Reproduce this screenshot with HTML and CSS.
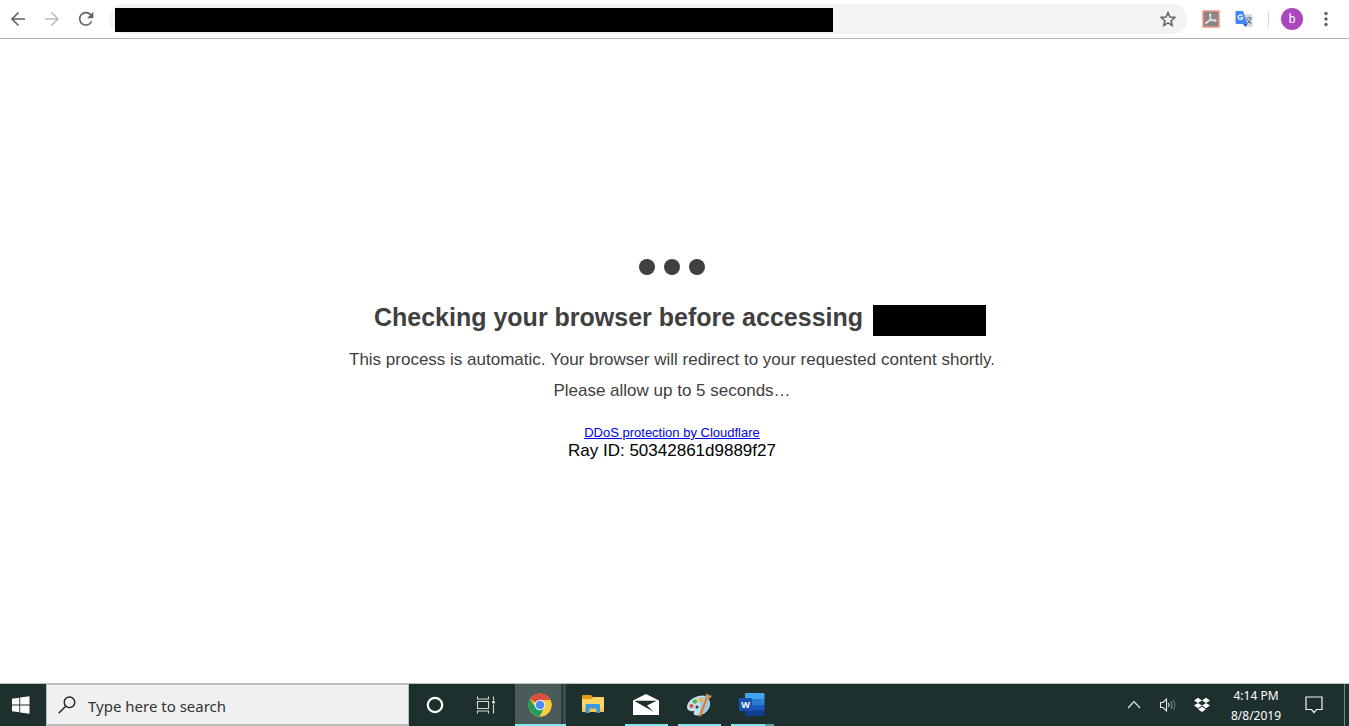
FILE: index.html
```
<!DOCTYPE html>
<html lang="en">
<head>
    <meta charset="UTF-8">
    <meta name="viewport" content="width=device-width, initial-scale=1.0">
    <title>Just a moment...</title>
    <link rel="stylesheet" href="styles.css">
</head>
<body>
    <header class="toolbar">
        <nav class="nav-buttons">
            <button class="icon-button" type="button" aria-label="Back">
                <svg width="16" height="16" viewBox="0 0 16 16" fill="none" stroke="#5f6368" stroke-width="1.6"><path d="M15 8H2.5M8.5 1.5L2 8l6.500 6.500"/></svg>
            </button>
            <button class="icon-button" type="button" aria-label="Forward">
                <svg width="16" height="16" viewBox="0 0 16 16" fill="none" stroke="#bbbdbf" stroke-width="1.6"><path d="M1 8h12.500M7.500 1.500L14 8l-6.500 6.500"/></svg>
            </button>
            <button class="icon-button" type="button" aria-label="Reload">
                <svg width="16" height="16" viewBox="0 0 16 16"><path d="M13.600 10.200A6.200 6.200 0 1 1 12.600 3.800" fill="none" stroke="#5f6368" stroke-width="1.600"/><path d="M15.300 0.800v6.400H9z" fill="#5f6368"/></svg>
            </button>
        </nav>
        <div class="omnibox">
            <input class="address" type="text" aria-label="Address">
            <button class="icon-button" type="button" aria-label="Bookmark">
                <svg width="16" height="16" viewBox="0 0 16 16" fill="none" stroke="#5f6368" stroke-width="1.500"><path d="M8 1.600l1.900 4.500 4.900.4-3.700 3.200 1.100 4.700L8 11.900l-4.200 2.500 1.100-4.700L1.200 6.500l4.900-.4z"/></svg>
            </button>
        </div>
        <div class="extensions">
            <button class="icon-button" type="button" aria-label="Adobe Acrobat">
                <svg width="18" height="18" viewBox="0 0 18 18"><rect x="1" y="1" width="16" height="16" fill="#8b8583" stroke="#ef9584" stroke-width="1.500"/><path d="M4 13.500c2-.4 4.500-5 4.700-8.500.1-1.600-1.300-1.200-1 .3.600 3 3 5.400 5.200 5.900 1.700.3 1.600-1.300-.2-1.300-3.200 0-6.400 1-8.200 2.400-.9.700-.9 1.300-.5 1.200z" fill="none" stroke="#eeeae8" stroke-width="1.100"/></svg>
            </button>
            <button class="icon-button" type="button" aria-label="Google Translate">
                <svg width="18" height="18" viewBox="0 0 18 18"><path d="M7 4h9.500q1 0 1 1v11q0 1-1 1H11z" fill="#dadcdc"/><path d="M1.500 1H8l4.500 13H1.500q-1 0-1-1V2q0-1 1-1z" fill="#4386f5"/><path d="M8 14h4.500L10.500 17z" fill="#2955c4"/><path d="M7.300 5.700A2.300 2.300 0 1 0 7.800 7.500H5.600" fill="none" stroke="#fff" stroke-width="1.200"/><path d="M11 8h6M14 6.800V8M16 8c-.5 2.500-2 4.300-4 5.500M12.300 9c.7 2 2.200 3.700 4.200 4.700" fill="none" stroke="#69828d" stroke-width="1.100"/></svg>
            </button>
        </div>
        <div class="profile">
            <button class="avatar" type="button" aria-label="Profile">b</button>
            <button class="icon-button" type="button" aria-label="Menu">
                <svg width="16" height="16" viewBox="0 0 16 16" fill="#5f6368"><circle cx="8" cy="2.500" r="1.700"/><circle cx="8" cy="8" r="1.700"/><circle cx="8" cy="13.500" r="1.700"/></svg>
            </button>
        </div>
    </header>

    <main class="content">
        <div class="bubbles">
            <span class="bubble"></span>
            <span class="bubble"></span>
            <span class="bubble"></span>
        </div>
        <h1 class="title">Checking your browser before accessing <span class="host"></span></h1>
        <p class="message">This process is automatic. Your browser will redirect to your requested content shortly.</p>
        <p class="message">Please allow up to 5 seconds…</p>
        <div class="attribution">
            <a href="#">DDoS protection by Cloudflare</a>
            <div class="ray">Ray ID: 50342861d9889f27</div>
        </div>
    </main>

    <footer class="taskbar">
        <button class="start" type="button" aria-label="Start">
            <svg width="18" height="18" viewBox="0 0 18 18" fill="#fff"><path d="M0 2.700l7.300-1V8.500H0zM8.200 1.500L17.500.3v8.200H8.200zM0 9.400h7.300v6.900L0 15.300zM8.200 9.400h9.300v8.300l-9.300-1.300z"/></svg>
        </button>
        <label class="search">
            <svg width="18" height="18" viewBox="0 0 18 18" fill="none" stroke="#222" stroke-width="1.400"><circle cx="11.500" cy="6.300" r="5.300"/><path d="M7.700 10.200L.7 17.200"/></svg>
            <input class="search-input" type="text" placeholder="Type here to search" aria-label="Search">
        </label>
        <div class="tools">
            <button class="tool" type="button" aria-label="Cortana">
                <svg width="20" height="20" viewBox="0 0 20 20"><circle cx="10" cy="10" r="7.200" fill="none" stroke="#fff" stroke-width="2.200"/></svg>
            </button>
            <button class="tool" type="button" aria-label="Task View">
                <svg width="20" height="20" viewBox="0 0 20 20" fill="none" stroke="#d5d9d8" stroke-width="1.100"><path d="M1.500 1.500v2.500h11V1.500M1.500 18.500V16h11v2.500M1.500 6.500h11v7h-11zM17.500 1.500v4M17.500 9.500v9"/><path d="M16.300 6h2.400v2.400h-2.400z" fill="#fff" stroke="none"/></svg>
            </button>
        </div>
        <div class="apps">
            <button class="app open active" type="button" aria-label="Chrome">
                <svg width="24" height="24" viewBox="0 0 24 24"><circle cx="12" cy="12" r="11.500" fill="#fbcb3c"/><path d="M12 12L2 6.300A11.500 11.500 0 0 1 22.400 7H12z" fill="#dc4d3d"/><path d="M2 6.300A11.500 11.500 0 0 0 11.600 23.500L16.600 14.700 12 12l-4.500 2.200z" fill="#229b5d"/><path d="M12 7h10.400A11.500 11.500 0 0 1 11.600 23.500l4.900-9z" fill="#fbcb3c"/><circle cx="12" cy="12" r="5.300" fill="#f4f5f5"/><circle cx="12" cy="12" r="4.300" fill="#4c8bf5"/></svg>
            </button>
            <button class="app" type="button" aria-label="File Explorer">
                <svg width="24" height="24" viewBox="0 0 24 24"><path d="M1 3q0-1 1-1h8l2 2v4H1z" fill="#e09b12"/><path d="M1 6h9.500l2-2H22q1 0 1 1v14H1z" fill="#fed667"/><path d="M1 15h22v4H1z" fill="#f8c74e"/><path d="M4.500 20v-8q0-1 1-1h12.500q1 0 1 1v8h-3.500v-4.500h-7V20z" fill="#3b99de"/></svg>
            </button>
            <button class="app open" type="button" aria-label="Mail">
                <svg width="26" height="24" viewBox="0 0 26 24"><path d="M0 7.500L13 1l13 6.500V22H0z" fill="#fff"/><path d="M2.300 7.800h21.400L14 12.500l6.600 6.300L2.300 8.500z" fill="#1e302e"/></svg>
            </button>
            <button class="app open" type="button" aria-label="Paint">
                <svg width="26" height="24" viewBox="0 0 26 24"><path d="M13 3c7-2 11 2 11 8s-6 11.500-13 11.500c-4 0-4-3-2-4.500-3 1-8 0-8-4C1 9 7 4 13 3z" fill="#c3def0"/><path d="M15 4c5-.5 8 2.500 8 7 0 5-4 9-9 10z" fill="#9bc9e7"/><circle cx="5.500" cy="13" r="2" fill="#e84b3a"/><circle cx="9" cy="8.500" r="2.200" fill="#59b948"/><circle cx="14.500" cy="7" r="2.300" fill="#f2b72f"/><circle cx="11" cy="14" r="1.500" fill="#293f45"/><path d="M20.500 6L14 22.500" stroke="#d9822b" stroke-width="2.200" stroke-linecap="round"/><path d="M19 6l1-5.500 2.500 1.200L26 3l-4 4z" fill="#c49563"/></svg>
            </button>
            <button class="app open grouped" type="button" aria-label="Word">
                <svg width="26" height="24" viewBox="0 0 26 24"><path d="M6 1q0-1 1-1h17.500q1 0 1 1v5.500H6z" fill="#41a5ee"/><path d="M6 6h19.500v6H6z" fill="#2b7cd3"/><path d="M6 12h19.500v5.500H6z" fill="#185abd"/><path d="M6 17.500h19.500V22q0 1-1 1H7q-1 0-1-1z" fill="#103f91"/><rect x="0" y="5" width="13" height="13" rx="1" fill="#1a52b3"/><text class="word-letter" x="6.500" y="15" text-anchor="middle">W</text></svg>
            </button>
        </div>
        <div class="tray">
            <button class="tray-button" type="button" aria-label="Show hidden icons">
                <svg width="16" height="16" viewBox="0 0 16 16" fill="none" stroke="#e6e9e8" stroke-width="1.200"><path d="M2 11L8 4.700l6 6.300"/></svg>
            </button>
            <button class="tray-button" type="button" aria-label="Volume">
                <svg width="18" height="16" viewBox="0 0 18 16" fill="none" stroke="#e6e9e8" stroke-width="1.100"><path d="M1.500 5.500h2.500L7.500 2v12L4 10.500H1.500z"/><path d="M9.500 6q1.300 2 0 4"/><path d="M11.700 4.300q2.600 3.700 0 7.400" stroke="#8b9694"/><path d="M14 2.700q3.800 5.300 0 10.600" stroke="#667371"/></svg>
            </button>
            <button class="tray-button" type="button" aria-label="Dropbox">
                <svg width="16" height="16" viewBox="0 0 16 16" fill="#fff"><path d="M4 .8L8 3.400 4 6 0 3.400zM12 .8l4 2.600L12 6 8 3.400zM4 6l4 2.600-4 2.600L0 8.600zM12 6l4 2.600-4 2.600-4-2.600zM8 9.700l4 2.600L8 15l-4-2.700z"/></svg>
            </button>
            <button class="clock" type="button"><span>4:14 PM</span><span>8/8/2019</span></button>
            <button class="notifications" type="button" aria-label="Notifications">
                <svg width="18" height="18" viewBox="0 0 18 18" fill="none" stroke="#f1f3f2" stroke-width="1.200"><path d="M1 1h16v12.500h-5.500L9 16.500l-2.500-3H1z"/></svg>
            </button>
            <button class="show-desktop" type="button" aria-label="Show desktop"></button>
        </div>
    </footer>
</body>
</html>
```
FILE: styles.css
```
* {
    box-sizing: border-box;
}
body {
    display: flex;
    flex-direction: column;
    min-height: 100vh;
    margin: 0;
    background: #fff;
    font-family: "Liberation Sans", Arial, sans-serif;
}
button {
    padding: 0;
    border: 0;
    background: none;
    font: inherit;
}
svg {
    display: block;
}

/* Browser toolbar */
.toolbar {
    display: flex;
    align-items: center;
    height: 39px;
    padding: 0 15px 1px 10px;
    border-bottom: 1px solid #b4b4b4;
}
.nav-buttons {
    display: flex;
    gap: 18px;
}
.icon-button {
    display: flex;
    align-items: center;
    justify-content: center;
    min-width: 16px;
}
.omnibox {
    display: flex;
    flex: 1;
    align-items: center;
    justify-content: space-between;
    height: 30px;
    margin: 0 15px;
    padding: 0 11px 0 6px;
    border-radius: 15px;
    background: #f1f3f4;
}
.address {
    flex: 0 1 718px;
    min-width: 0;
    height: 24px;
    margin-top: 2px;
    padding: 0 8px;
    border: 0;
    background: #000;
    color: #fff;
}
.extensions {
    display: flex;
    gap: 15px;
    padding-right: 15px;
}
.profile {
    display: flex;
    align-items: center;
    gap: 15px;
    padding-left: 13px;
    background: linear-gradient(#d5d7d9, #d5d7d9) left center / 1px 16px no-repeat;
}
.avatar {
    width: 22px;
    height: 22px;
    border-radius: 50%;
    background: #ab47bc;
    color: #fff;
    font: 12px/22px Roboto, sans-serif;
}

/* Challenge page */
.content {
    flex: 1;
    padding: 220px 5px 0 0;
    color: #404040;
    text-align: center;
}
.bubbles {
    display: flex;
    justify-content: center;
    gap: 9px;
}
.bubble {
    width: 16px;
    height: 16px;
    border-radius: 50%;
    background: #404040;
}
.title {
    display: flex;
    align-items: flex-start;
    justify-content: center;
    gap: 10px;
    margin: 30px 0 8px;
    padding-left: 16px;
    font-size: 25px;
    line-height: 25px;
}
.host {
    width: 113px;
    height: 31px;
    background: #000;
}
.message {
    margin: 0;
    font-size: 17px;
    line-height: 31px;
}
.attribution {
    margin-top: 18px;
    color: #000;
    font-size: 17px;
    line-height: 18px;
}
.attribution a {
    display: block;
    color: #00e;
    font-size: 13px;
}

/* Windows taskbar */
.taskbar {
    display: flex;
    height: 43px;
    border-top: 1px solid #b9bfbe;
    background: #1e302e;
    font-family: "Noto Sans", "Open Sans", sans-serif;
}
.taskbar button {
    display: flex;
    align-items: center;
    justify-content: center;
}
.taskbar .start {
    width: 46px;
    padding-right: 5px;
}
.search {
    display: flex;
    flex: 0 1 363px;
    align-items: center;
    gap: 12px;
    padding-left: 11px;
    border: 1px solid #bbb;
    border-bottom-width: 2px;
    background: #f0f0f0;
}
.search-input {
    flex: 1;
    min-width: 0;
    padding: 3px 0 0;
    border: 0;
    outline: 0;
    background: none;
    font: 15px/20px "Noto Sans", "Open Sans", sans-serif;
}
.search-input::placeholder {
    color: #333;
    opacity: 1;
}
.tools {
    display: flex;
    margin-right: 2px;
}
.tool {
    width: 51px;
}
.apps {
    display: flex;
}
.app {
    position: relative;
    width: 53px;
}
.app.open::after {
    content: "";
    position: absolute;
    right: 4px;
    bottom: 0;
    left: 6px;
    height: 2px;
    background: #86e5ea;
}
.app.active {
    background: linear-gradient(to right, #1e302e 2px, #4b5b59 2px, #4b5b59 48px, #2b3c3a 48px, #2b3c3a 50px, #3c4c4a 50px);
}
.app.active::after {
    right: 0;
    left: 2px;
}
.app.grouped::after {
    background: linear-gradient(to right, #86e5ea 34px, #5f9fa3 34px);
}
.word-letter {
    fill: #fff;
    font: bold 9px "Open Sans", sans-serif;
}
.tray {
    display: flex;
    margin-left: auto;
}
.tray-button {
    width: 34px;
}
.taskbar .clock {
    flex-direction: column;
    width: 74px;
    padding-top: 2px;
    color: #fff;
    font-size: 12px;
    line-height: 20px;
}
.notifications {
    width: 42px;
}
.show-desktop {
    width: 5px;
    margin-left: 9px;
    border-left: 1px solid #79827f;
}
```
